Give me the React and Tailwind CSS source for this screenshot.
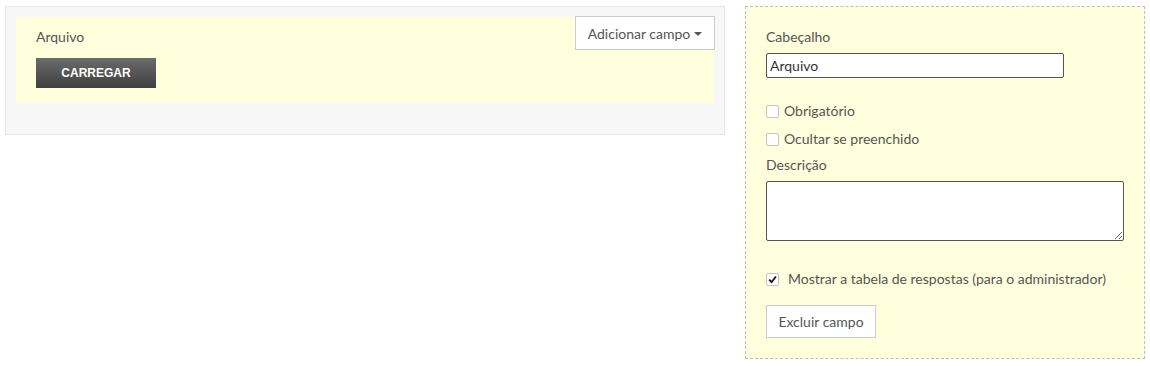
import React from 'react';

function Checkbox({ checked }) {
  return (
    <span className="flex h-[13px] w-[13px] shrink-0 items-center justify-center rounded-[2px] border border-[#c4c4c4] bg-white">
      {checked && (
        <svg className="h-[9px] w-[9px]" viewBox="0 0 10 10">
          <path d="M1.3 5.2 L4 8 L8.8 1.6" fill="none" stroke="#111" strokeWidth="2" />
        </svg>
      )}
    </span>
  );
}

export default function App() {
  return (
    <div
      className="flex items-start gap-5 bg-white pl-[5px] pt-[6px] text-[14px] text-[#555]"
      style={{ fontFamily: 'Lato, "Open Sans", sans-serif' }}
    >
      <div className="w-[720px] border border-[#e6e6e6] bg-[#f7f7f7] px-[10px] pb-[31px] pt-[10px]">
        <div className="relative bg-[#ffffdd] pb-[15px] pl-5 pt-[10px]">
          <div className="leading-5">Arquivo</div>
          <button
            className="mt-[11px] flex h-[30px] w-[120px] items-center justify-center bg-gradient-to-b from-[#6b6b6b] to-[#3f3f3f] text-[12px] font-bold text-white"
            style={{ fontFamily: '"Liberation Sans", Arial, sans-serif' }}
          >
            CARREGAR
          </button>
          <button className="absolute -right-px -top-px flex h-[34px] w-[140px] items-center justify-center gap-[4px] border border-[#cccccc] bg-white text-[14px] text-[#555]">
            Adicionar campo
            <span className="mt-px h-0 w-0 border-x-[4px] border-t-[4px] border-x-transparent border-t-[#555]" />
          </button>
        </div>
      </div>

      <div className="flex h-[353px] w-[400px] flex-col border border-dashed border-[#bdbdbd] bg-[#ffffdd] pl-5 pt-5">
        <div className="leading-5">Cabeçalho</div>
        <input
          className="mt-[6px] h-[25px] w-[298px] rounded-[2px] border border-[#555] bg-white px-[3px] text-[14px] text-[#333] outline-none"
          defaultValue="Arquivo"
        />
        <label className="mt-[23px] flex items-center gap-[5px] leading-5">
          <Checkbox />
          Obrigatório
        </label>
        <label className="mt-[8px] flex items-center gap-[5px] leading-5">
          <Checkbox />
          Ocultar se preenchido
        </label>
        <div className="mt-[6px] leading-5">Descrição</div>
        <textarea className="mt-[6px] h-[60px] w-[358px] rounded-[2px] border border-[#555] bg-white outline-none" />
        <label className="mt-[28px] flex items-center gap-[9px] leading-5">
          <Checkbox checked />
          Mostrar a tabela de respostas (para o administrador)
        </label>
        <button className="mt-[16px] flex h-[33px] w-[110px] items-center justify-center border border-[#cccccc] bg-white text-[14px] text-[#555]">
          Excluir campo
        </button>
      </div>
    </div>
  );
}
